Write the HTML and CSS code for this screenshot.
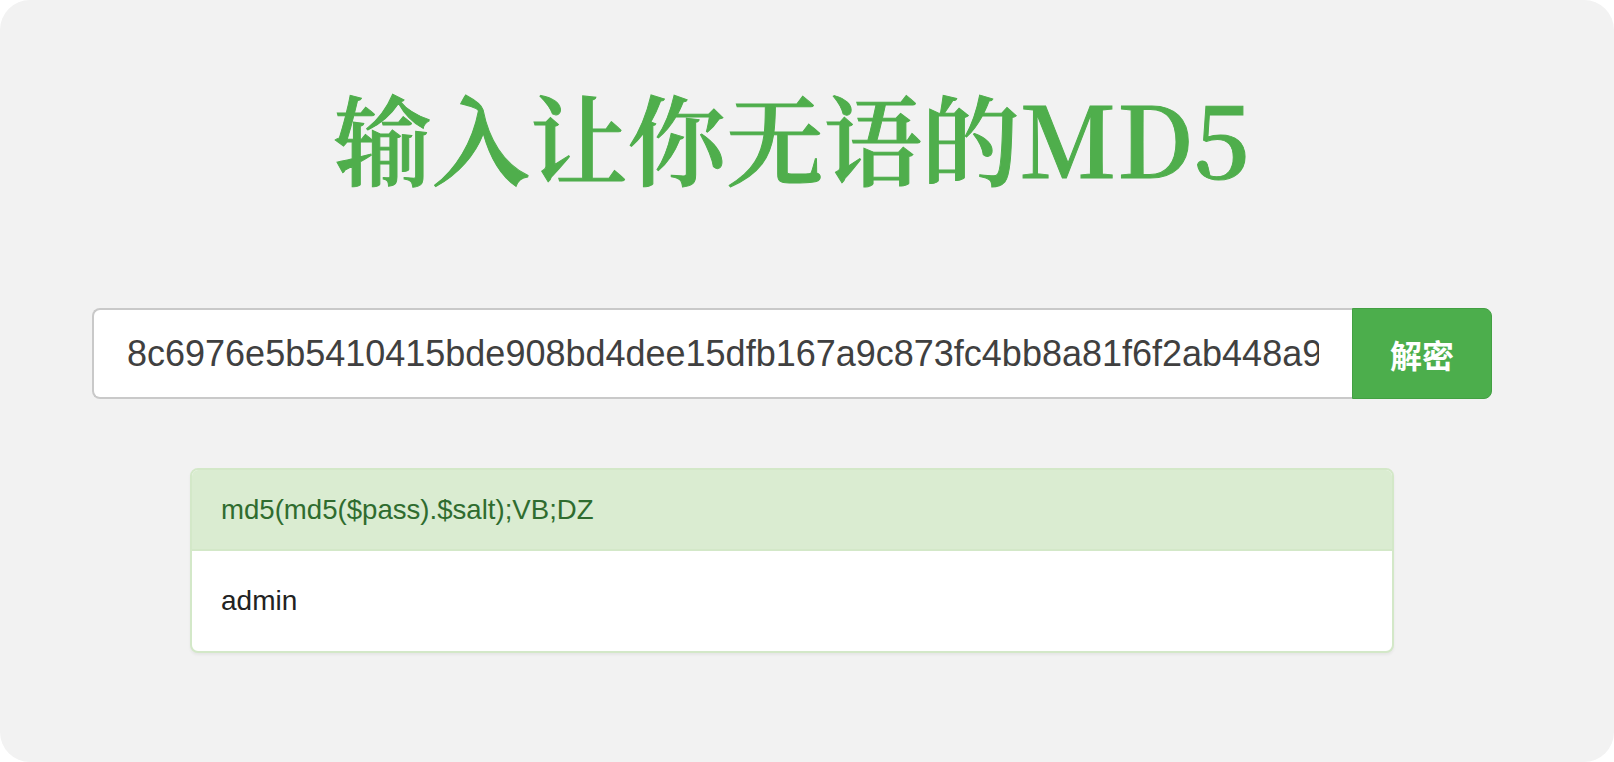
FILE: index.html
```html
<!DOCTYPE html>
<html lang="zh-CN">
<head>
<meta charset="utf-8">
<title>输入让你无语的MD5</title>
<link rel="stylesheet" href="styles.css">
</head>
<body>
<div class="page">
  <h1 class="title">输入让你无语的MD5</h1>
  <div class="search">
    <input class="hash-input" type="text" value="8c6976e5b5410415bde908bd4dee15dfb167a9c873fc4bb8a81f6f2ab448a918">
    <button class="btn" type="button">解密</button>
  </div>
  <div class="panel">
    <div class="panel-heading">md5(md5($pass).$salt);VB;DZ</div>
    <div class="panel-body">admin</div>
  </div>
</div>
</body>
</html>
```

FILE: styles.css
```css
html, body {
  margin: 0;
  padding: 0;
  background: #ffffff;
}

.page {
  width: 1614px;
  height: 762px;
  box-sizing: border-box;
  padding: 0 122px 0 92px;
  background: #f2f2f2;
  border-radius: 30px;
  overflow: hidden;
  display: flex;
  flex-direction: column;
  font-family: "Liberation Sans", "Noto Sans CJK SC", sans-serif;
}

.title {
  margin: 76px 0 0;
  height: 120px;
  line-height: 120px;
  text-align: center;
  font-family: "Noto Serif CJK SC", "Liberation Serif", "Noto Sans CJK SC", serif;
  font-size: 98px;
  font-weight: 600;
  color: #4fae4c;
  -webkit-text-stroke: 1px #4fae4c;
  white-space: nowrap;
}

.search {
  margin-top: 112px;
  display: flex;
  height: 91px;
}

.hash-input {
  flex: 1;
  min-width: 0;
  box-sizing: border-box;
  height: 91px;
  margin: 0;
  padding: 0 33px;
  border: 2px solid #c9c9c9;
  border-right: none;
  border-radius: 8px 0 0 8px;
  background: #ffffff;
  color: #404040;
  font-family: "Liberation Sans", sans-serif;
  font-size: 36px;
  outline: none;
}

.btn {
  width: 140px;
  height: 91px;
  box-sizing: border-box;
  margin: 0;
  border: 1px solid #43a043;
  border-radius: 0 8px 8px 0;
  background: #4cae4c;
  color: #ffffff;
  font-family: "Noto Sans CJK SC", sans-serif;
  font-size: 32px;
  font-weight: bold;
  padding: 0;
}

.panel {
  margin: 69px 98px 0;
  border: 2px solid #d3e8c8;
  border-radius: 8px;
  background: #ffffff;
  overflow: hidden;
  box-shadow: 0 2px 3px rgba(0, 0, 0, 0.05);
}

.panel-heading {
  height: 81px;
  box-sizing: border-box;
  border-bottom: 2px solid #d3e8c8;
  background: #daecd1;
  color: #2f6c2f;
  font-size: 27.6px;
  padding: 0 29px;
  display: flex;
  align-items: center;
}

.panel-body {
  height: 100px;
  box-sizing: border-box;
  padding: 0 29px;
  color: #222222;
  font-size: 28px;
  display: flex;
  align-items: center;
}
```
